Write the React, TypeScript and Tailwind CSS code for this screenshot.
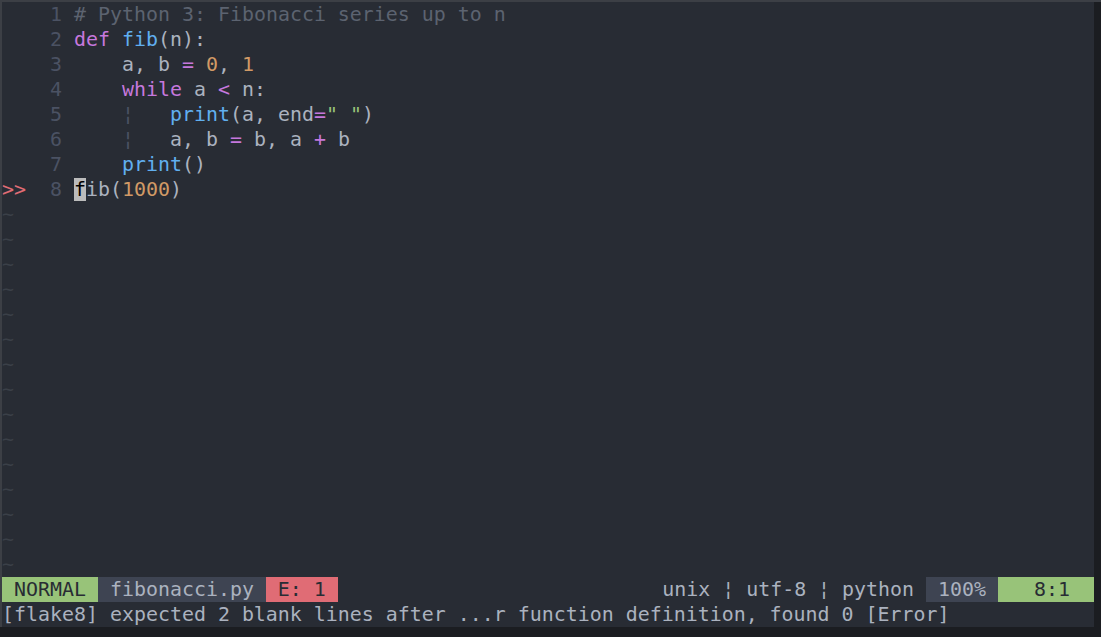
import type { ReactNode } from "react";

const FONT = { fontFamily: '"DejaVu Sans Mono", "Liberation Mono", monospace' };

type Tok = [string, string?];

const lines: Tok[][] = [
  [["# Python 3: Fibonacci series up to n", "text-[#5c6370]"]],
  [["def", "text-[#c678dd]"], [" "], ["fib", "text-[#61afef]"], ["(n):"]],
  [["    a, b "], ["=", "text-[#c678dd]"], [" "], ["0", "text-[#d19a66]"], [", "], ["1", "text-[#d19a66]"]],
  [["    "], ["while", "text-[#c678dd]"], [" a "], ["<", "text-[#c678dd]"], [" n:"]],
  [["    "], ["¦", "text-[#4b5263]"], ["   "], ["print", "text-[#61afef]"], ["(a, end"], ["=", "text-[#c678dd]"], ['" "', "text-[#98c379]"], [")"]],
  [["    "], ["¦", "text-[#4b5263]"], ["   a, b "], ["=", "text-[#c678dd]"], [" b, a "], ["+", "text-[#c678dd]"], [" b"]],
  [["    "], ["print", "text-[#61afef]"], ["()"]],
];

function Row({ sign, num, children }: { sign?: string; num: number; children: ReactNode }) {
  return (
    <div className="flex h-[25px] leading-[25px] whitespace-pre">
      <span className="w-[24px] text-[#e06c75]">{sign ?? ""}</span>
      <span className="w-[48px] text-right pr-[12px] text-[#4b5263]">{num}</span>
      <span className="text-[#abb2bf]">{children}</span>
    </div>
  );
}

function Tokens({ toks }: { toks: Tok[] }) {
  return (
    <>
      {toks.map(([t, c], i) => (
        <span key={i} className={c}>
          {t}
        </span>
      ))}
    </>
  );
}

export default function App() {
  return (
    <div className="w-[1101px] h-[637px] bg-[#1b1d21] overflow-hidden">
      <div className="h-[2px] bg-[#3c3f45]" />
      <div className="flex">
        <div className="w-[2px] h-[625px] bg-[#3c3f45]" />
        <div
          className="w-[1092px] h-[625px] bg-[#282c34] text-[19.93px] text-[#abb2bf] flex flex-col"
          style={FONT}
        >
          {lines.map((toks, i) => (
            <Row key={i} num={i + 1}>
              <Tokens toks={toks} />
            </Row>
          ))}
          <Row sign=">>" num={8}>
            <span className="bg-[#bcbcbc] text-black">f</span>
            <span>ib(</span>
            <span className="text-[#d19a66]">1000</span>
            <span>)</span>
          </Row>
          {Array.from({ length: 15 }).map((_, i) => (
            <div key={i} className="h-[25px] leading-[25px] text-[#3b4048]">
              ~
            </div>
          ))}

          {/* statusline */}
          <div className="flex h-[25px] leading-[25px] whitespace-pre">
            <span className="bg-[#98c379] text-[#282c34]"> NORMAL </span>
            <span className="bg-[#3e4452] text-[#abb2bf]"> fibonacci.py </span>
            <span className="bg-[#e06c75] text-[#282c34]"> E: 1 </span>
            <span className="flex-1" />
            <span className="text-[#abb2bf]">unix ¦ utf-8 ¦ python </span>
            <span className="bg-[#3e4452] text-[#abb2bf]"> 100% </span>
            <span className="bg-[#98c379] text-[#282c34]">   8:1  </span>
          </div>
          <div className="h-[25px] leading-[25px] whitespace-pre text-[#abb2bf]">
            [flake8] expected 2 blank lines after ...r function definition, found 0 [Error]
          </div>
        </div>
      </div>
    </div>
  );
}
